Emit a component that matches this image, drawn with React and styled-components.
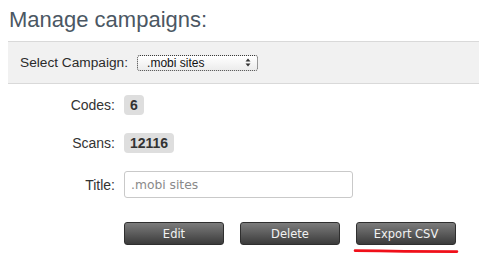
import React from "react";
import styled, { createGlobalStyle } from "styled-components";

const GlobalStyle = createGlobalStyle`
  body {
    margin: 0;
    background: #fff;
    font-family: "Liberation Sans", Arial, Helvetica, sans-serif;
  }
`;

function SelectArrows() {
  return (
    <svg width="6" height="9" viewBox="0 0 6 9">
      <path d="M3 0.5 L5.5 3.5 L0.5 3.5 Z" fill="#333" />
      <path d="M3 8.5 L5.5 5.5 L0.5 5.5 Z" fill="#333" />
    </svg>
  );
}

function Underline() {
  return (
    <Scribble width="106" height="6" viewBox="0 0 106 6">
      <path
        d="M2 2.6 Q50 3.4 104 3.6"
        stroke="#f0101a"
        strokeWidth="2.6"
        strokeLinecap="round"
        fill="none"
      />
    </Scribble>
  );
}

function App() {
  return (
    <>
      <GlobalStyle />
      <Page>
        <Heading>Manage campaigns:</Heading>
        <Band>
          <BandLabel>Select Campaign:</BandLabel>
          <SelectBox>
            <span>.mobi sites</span>
            <SelectArrows />
          </SelectBox>
        </Band>
        <Form>
          <Label>Codes:</Label>
          <div>
            <Badge>6</Badge>
          </div>
          <Label>Scans:</Label>
          <div>
            <Badge>12116</Badge>
          </div>
          <Label>Title:</Label>
          <div>
            <TextInput placeholder=".mobi sites" />
          </div>
          <Actions>
            <Button>Edit</Button>
            <Button>Delete</Button>
            <ButtonWrap>
              <Button>Export CSV</Button>
              <Underline />
            </ButtonWrap>
          </Actions>
        </Form>
      </Page>
    </>
  );
}

// styled component
const Page = styled.div`
  padding-left: 8px;
`;

const Heading = styled.h1`
  margin: 7px 0 8px 1px;
  font-size: 22px;
  line-height: 26px;
  font-weight: normal;
  color: #4b5763;
`;

const Band = styled.div`
  display: flex;
  align-items: center;
  height: 41px;
  padding-left: 12px;
  background: #f1f1f1;
  border-top: 1px solid #d9d9d9;
  border-bottom: 1px solid #d9d9d9;
`;

const BandLabel = styled.span`
  font-size: 13.7px;
  color: #2b2b2b;
  margin-right: 9px;
`;

const SelectBox = styled.div`
  box-sizing: border-box;
  display: flex;
  align-items: center;
  justify-content: space-between;
  width: 121px;
  height: 16px;
  padding: 0 6px 0 9px;
  border: 1px dotted #3a3a3a;
  border-radius: 3px;
  background: linear-gradient(#ffffff, #ececec);
  font-size: 12px;
  color: #111;
`;

const Form = styled.div`
  display: grid;
  grid-template-columns: 107px 1fr;
  column-gap: 9px;
  row-gap: 18px;
  align-items: center;
  margin-top: 11px;
`;

const Label = styled.div`
  text-align: right;
  font-size: 14px;
  color: #333;
`;

const Badge = styled.span`
  display: inline-block;
  height: 20px;
  line-height: 20px;
  padding: 0 6px;
  border-radius: 4px;
  background: #dedede;
  font-size: 14px;
  font-weight: bold;
  color: #333;
`;

const TextInput = styled.input`
  box-sizing: border-box;
  display: block;
  width: 229px;
  height: 27px;
  padding: 0 6px;
  border: 1px solid #c9c9c9;
  border-radius: 3px;
  font-family: "DejaVu Sans", sans-serif;
  font-size: 12.3px;
  color: #555;
  outline: none;
  &::placeholder {
    color: #8a8a8a;
  }
`;

const Actions = styled.div`
  grid-column: 2;
  display: flex;
  align-items: flex-start;
  gap: 16px;
  margin-top: 6px;
`;

const ButtonWrap = styled.div`
  display: flex;
  flex-direction: column;
  align-items: flex-start;
`;

const Button = styled.button`
  box-sizing: border-box;
  display: block;
  width: 100px;
  height: 23px;
  padding: 0;
  border: 1px solid #2f2f2f;
  border-radius: 3px;
  background: linear-gradient(#7c7c7c, #3b3b3b);
  font-family: "DejaVu Sans", sans-serif;
  font-size: 11.5px;
  color: #f2f2f2;
`;

const Scribble = styled.svg`
  display: block;
  margin: 3px 0 0 -3px;
`;

export default App;
